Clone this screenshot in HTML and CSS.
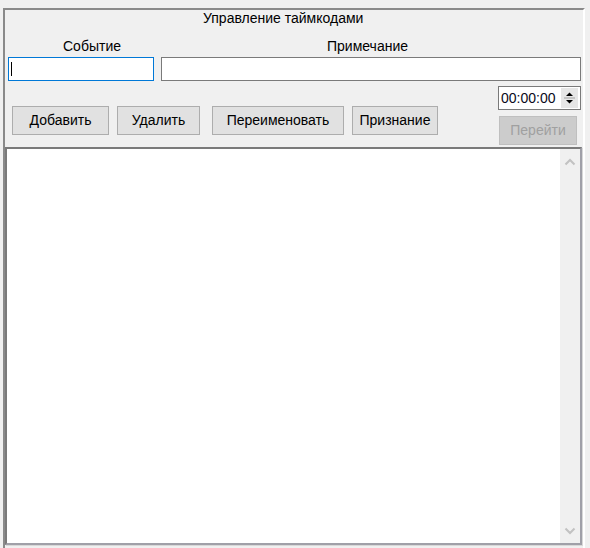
FILE: index.html
```html
<!DOCTYPE html>
<html>
<head>
<meta charset="utf-8">
<link rel="stylesheet" href="styles.css">
</head>
<body>
<div class="frame">
  <div class="title">Управление таймкодами</div>
  <div class="labels">
    <span class="lbl lbl-event">Событие</span>
    <span class="lbl lbl-note">Примечание</span>
  </div>
  <div class="inputs">
    <div class="field field-event focused"><span class="caret"></span></div>
    <div class="field field-note"></div>
  </div>
  <div class="actions">
    <div class="btns">
      <div class="btn b-add">Добавить</div>
      <div class="btn b-del">Удалить</div>
      <div class="btn b-ren">Переименовать</div>
      <div class="btn b-rec">Признание</div>
    </div>
    <div class="side">
      <div class="time">
        <span class="time-text">00:00:00</span>
        <div class="spin">
          <svg width="17" height="20" viewBox="0 0 17 20">
            <path d="M5 8 L8.5 4.5 L12 8 Z" fill="#000"/>
            <line x1="3" y1="10" x2="14" y2="10" stroke="#a0a0a0" stroke-width="1"/>
            <path d="M5 12 L8.5 15.5 L12 12 Z" fill="#000"/>
          </svg>
        </div>
      </div>
      <div class="btn b-go">Перейти</div>
    </div>
  </div>
  <div class="list">
    <div class="list-body"></div>
    <div class="scroll">
      <svg class="arr" width="12" height="8" viewBox="0 0 12 8"><path d="M1.5 6.5 L6 2 L10.5 6.5" fill="none" stroke="#c2c2c2" stroke-width="2"/></svg>
      <svg class="arr" width="12" height="8" viewBox="0 0 12 8"><path d="M1.5 1.5 L6 6 L10.5 1.5" fill="none" stroke="#c2c2c2" stroke-width="2"/></svg>
    </div>
  </div>
</div>
</body>
</html>
```
FILE: styles.css
```css
html, body {
  margin: 0;
  padding: 0;
  background: #f0f0f0;
  font-family: "Liberation Sans", Arial, sans-serif;
  font-size: 14px;
  color: #000;
  overflow: hidden;
}
.frame {
  margin: 8px 0 0 3px;
  width: 578px;
  height: 540px;
  border-top: 2px solid #8a8a8a;
  border-left: 2px solid #8a8a8a;
  border-right: 2px solid #ffffff;
  box-sizing: content-box;
}
.title {
  padding-left: 198px;
  line-height: 16px;
  height: 16px;
}
.labels {
  position: relative;
  height: 31px;
}
.lbl {
  position: absolute;
  top: 12px;
  line-height: 16px;
}
.lbl-event { left: 58px; }
.lbl-note { left: 322px; }
.inputs {
  display: flex;
  height: 24px;
}
.field {
  box-sizing: border-box;
  height: 24px;
  background: #fff;
  border: 1px solid #7a7a7a;
}
.field-event {
  margin-left: 3px;
  width: 146px;
  border-color: #0078d7;
  display: flex;
  align-items: center;
  padding-left: 2px;
}
.caret {
  width: 1px;
  height: 14px;
  background: #000;
}
.field-note {
  margin-left: 7px;
  width: 420px;
}
.actions {
  display: flex;
  margin-top: 5px;
  height: 59px;
}
.btns {
  display: flex;
  padding-top: 20px;
  padding-left: 7px;
}
.btn {
  box-sizing: border-box;
  height: 29px;
  background: #e1e1e1;
  border: 1px solid #adadad;
  display: flex;
  align-items: center;
  justify-content: center;
  padding-bottom: 1px;
}
.b-add { width: 97px; }
.b-del { width: 83px; margin-left: 8px; }
.b-ren { width: 132px; margin-left: 12px; }
.b-rec { width: 86px; margin-left: 8px; }
.side {
  margin-left: 60px;
  width: 83px;
}
.time {
  box-sizing: border-box;
  height: 24px;
  width: 83px;
  background: #fff;
  border: 1px solid #7a7a7a;
  display: flex;
  align-items: center;
  justify-content: space-between;
}
.time-text {
  padding-left: 2px;
  color: #0a0a20;
}
.spin {
  width: 17px;
  height: 20px;
  margin-right: 2px;
  background: #e6e6e6;
}
.spin svg { display: block; }
.b-go {
  margin-top: 6px;
  margin-left: 1px;
  width: 78px;
  background: #cccccc;
  border-color: #bfbfbf;
  color: #a0a0a0;
}
.list {
  margin-top: 2px;
  box-sizing: border-box;
  width: 577px;
  height: 398px;
  border-top: 2px solid #7a7a7a;
  border-left: 2px solid #7a7a7a;
  border-right: 2px solid #a0a0a8;
  border-bottom: 2px solid #a0a0a8;
  box-shadow: 1px 1px 0 #d8d8d8;
  display: flex;
  background: #fff;
}
.list-body {
  flex: 1;
}
.scroll {
  width: 20px;
  background: #f0f0f0;
  display: flex;
  flex-direction: column;
  justify-content: space-between;
  align-items: center;
  padding: 9px 0 8px;
  box-sizing: border-box;
}
.arr { display: block; }
```
